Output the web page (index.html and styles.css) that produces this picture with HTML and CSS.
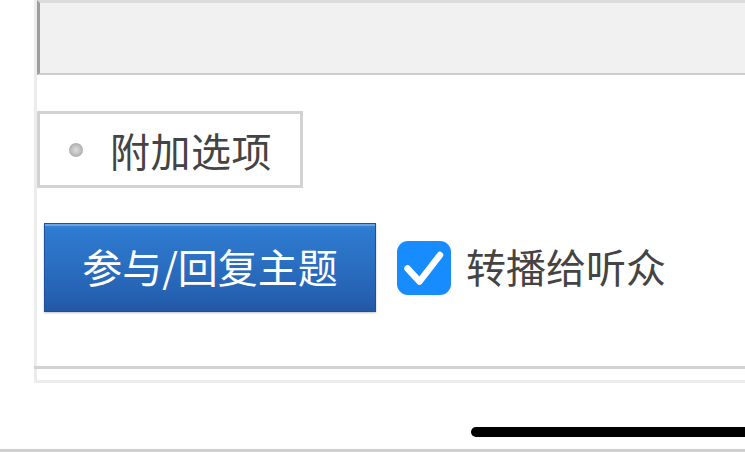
FILE: index.html
```html
<!DOCTYPE html>
<html lang="zh">
<head>
<meta charset="utf-8">
<link rel="stylesheet" href="styles.css">
</head>
<body>
<div class="screen">
  <div class="panel">
    <div class="editor"></div>
    <div class="options"><span class="dot"></span><span class="options-label">附加选项</span></div>
    <div class="actions">
      <button class="submit">参与/回复主题</button>
      <label class="check">
        <span class="box"><svg viewBox="0 0 54 54" width="54" height="54"><path d="M10.5 27.5 L22.5 40.5 L43 14" fill="none" stroke="#fff" stroke-width="6.5" stroke-linecap="round" stroke-linejoin="round"/></svg></span>
        <span class="check-label">转播给听众</span>
      </label>
    </div>
    <div class="sep"></div>
  </div>
  <div class="home-area"><div class="home-bar"></div></div>
</div>
</body>
</html>
```
FILE: styles.css
```css
html, body {
  margin: 0;
  padding: 0;
  background: #fff;
}
.screen {
  width: 745px;
  height: 452px;
  overflow: hidden;
  font-family: "Noto Sans CJK SC", "Noto Sans", sans-serif;
}
.panel {
  margin-left: 34px;
  width: 760px;
  height: 369px;
  border-left: 3px solid #ececec;
  border-bottom: 3px solid #ececec;
  padding-bottom: 11px;
  display: flex;
  flex-direction: column;
}
.editor {
  height: 70px;
  background: #f1f1f1;
  border-top: 3px solid #dcdcdc;
  border-left: 3px solid #9d9d9d;
  border-bottom: 2px solid #cdcdcd;
  flex: none;
}
.options {
  margin-top: 36px;
  width: 260px;
  height: 71px;
  border: 3px solid #d2d2d2;
  display: flex;
  align-items: center;
  flex: none;
}
.dot {
  width: 14px;
  height: 14px;
  border-radius: 50%;
  margin-left: 29px;
  background: radial-gradient(circle at 50% 50%, #dcdcdc 0%, #c8c8c8 35%, #b0b0b0 65%, #d8d8d8 100%);
}
.options-label {
  margin-left: 27px;
  font-size: 40px;
  line-height: 1;
  color: #444;
  letter-spacing: 0.5px;
}
.actions {
  margin-top: 35px;
  margin-left: 7px;
  display: flex;
  align-items: center;
  flex: none;
}
.submit {
  width: 332px;
  height: 89px;
  margin: 0;
  padding: 0 0 4px;
  border: 1px solid #1f4f98;
  background: linear-gradient(#3a88d8 0%, #2e7bd0 6%, #2a6fc2 45%, #2560b0 85%, #2257a4 100%);
  box-shadow: inset 0 2px 0 rgba(255,255,255,0.25), 0 1px 2px rgba(0,0,0,0.25);
  color: #fff;
  font-family: "Noto Sans CJK SC", "Noto Sans", sans-serif;
  font-size: 40px;
  line-height: 1;
}
.check {
  margin-left: 21px;
  display: flex;
  align-items: center;
}
.box {
  width: 54px;
  height: 54px;
  border-radius: 11px;
  background: #168cff;
  display: block;
}
.box svg { display: block; }
.check-label {
  margin-left: 15px;
  font-size: 40px;
  line-height: 1;
  color: #444;
  padding-bottom: 4px;
}
.sep {
  margin-top: auto;
  margin-left: -3px;
  height: 3px;
  background: #d2d2d2;
  flex: none;
}
.home-area {
  height: 69px;
  border-bottom: 3px solid #cfcfcf;
  box-sizing: border-box;
  padding-top: 44px;
  padding-left: 471px;
}
.home-bar {
  width: 300px;
  height: 10px;
  border-radius: 5px;
  background: #000;
}
```
